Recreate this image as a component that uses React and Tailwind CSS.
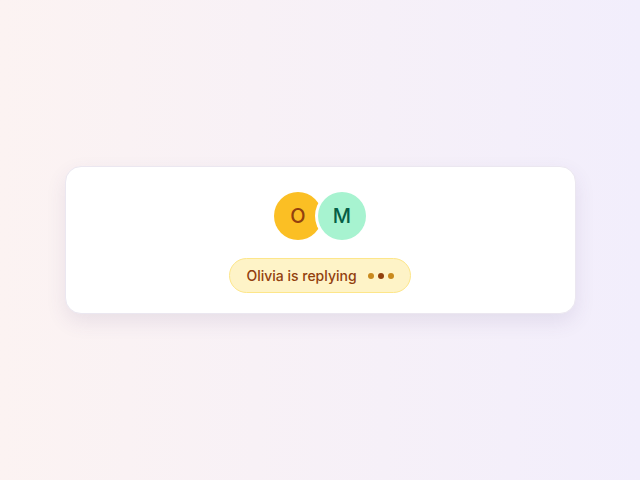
export default function App() {
  return (
    <div
      className="w-[640px] h-[480px] flex items-center justify-center bg-linear-to-r from-[#fcf3f2] to-[#f2eefc]"
      style={{ fontFamily: "Inter, 'Noto Sans', sans-serif" }}
    >
      <div className="w-[511px] h-[148px] bg-white rounded-2xl border border-[#ebe7f0] shadow-[0_8px_20px_rgba(80,60,120,0.10)] flex flex-col items-center pt-[25px]">
        <div className="flex items-center">
          <div className="w-12 h-12 rounded-full bg-[#fbbf24] flex items-center justify-center text-[20px] font-medium text-[#92400e] ring-[3px] ring-white">
            O
          </div>
          <div className="w-12 h-12 -ml-[4px] rounded-full bg-[#a7f3d0] flex items-center justify-center text-[20px] font-medium text-[#065f46] ring-[3px] ring-white">
            M
          </div>
        </div>
        <div className="mt-[18px] h-[35px] px-4 rounded-full bg-[#fef3c7] border border-[#fde68a] flex items-center gap-[11px]">
          <span className="text-[14px] font-medium text-[#92400e]">Olivia is replying</span>
          <div className="flex items-center gap-1">
            <span className="w-[6px] h-[6px] rounded-full bg-[#c98a1e]"></span>
            <span className="w-[6px] h-[6px] rounded-full bg-[#92400e]"></span>
            <span className="w-[6px] h-[6px] rounded-full bg-[#c98a1e]"></span>
          </div>
        </div>
      </div>
    </div>
  );
}
